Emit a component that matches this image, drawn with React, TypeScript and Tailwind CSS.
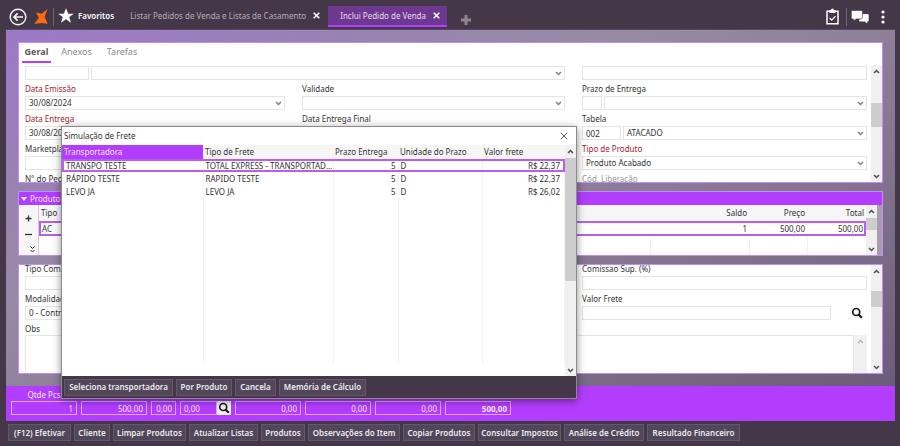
import React from 'react';
import clsx from 'clsx';

const quotes = [
  { carrier: 'TRANSPO TESTE', type: 'TOTAL EXPRESS - TRANSPORTADORA', days: 5, unit: 'D', price: 'R$ 22,37' },
  { carrier: 'RÁPIDO TESTE', type: 'RAPIDO TESTE', days: 5, unit: 'D', price: 'R$ 22,37' },
  { carrier: 'LEVO JA', type: 'LEVO JA', days: 5, unit: 'D', price: 'R$ 26,02' },
];

const footerActions = [
  { label: '(F12) Efetivar', width: 'w-[63px]' },
  { label: 'Cliente', width: 'w-9' },
  { label: 'Limpar Produtos', width: 'w-[73px]' },
  { label: 'Atualizar Listas', width: 'w-[69px]' },
  { label: 'Produtos', width: 'w-11' },
  { label: 'Observações do Item', width: 'w-[92px]' },
  { label: 'Copiar Produtos', width: 'w-[72px]' },
  { label: 'Consultar Impostos', width: 'w-[83px]' },
  { label: 'Análise de Crédito', width: 'w-20' },
  { label: 'Resultado Financeiro', width: 'w-[93px]' },
];

const dialogActions = [
  { label: 'Seleciona transportadora', width: 'w-[109px]' },
  { label: 'Por Produto', width: 'w-14' },
  { label: 'Cancela', width: 'w-[41px]' },
  { label: 'Memória de Cálculo', width: 'w-[87px]' },
];

function Chevron({ up, className }: { up?: boolean; className?: string }) {
  return (
    <svg viewBox="0 0 8 5" className={clsx('w-[7px] h-[5px]', className)} fill="none" stroke="currentColor" strokeWidth="1.8">
      <path d={up ? 'M1.2 4.2 4 1.4l2.8 2.8' : 'M1.2 .8 4 3.6 6.8 .8'} />
    </svg>
  );
}

function Cross({ className }: { className?: string }) {
  return (
    <svg viewBox="0 0 8 8" className={className} fill="none" stroke="currentColor">
      <path d="M.8.8l6.4 6.4M7.2.8.8 7.2" />
    </svg>
  );
}

function SearchIcon() {
  return (
    <svg viewBox="0 0 12 12" className="w-3 h-3" fill="none" stroke="#1c1c1c">
      <circle cx="5.2" cy="5" r="3.5" strokeWidth="1.7" />
      <path d="M7.6 7.6l3.2 3.2" strokeWidth="2.2" />
    </svg>
  );
}

function ScrollBar({ thumb, muted, className }: { thumb?: string; muted?: boolean; className?: string }) {
  return (
    <div className={clsx('flex shrink-0 flex-col items-center bg-[#f0f0f0]', muted ? 'text-[#b8b8b8]' : 'text-[#505050]', className)}>
      <div className="flex h-[13px] shrink-0 items-center">
        <Chevron up />
      </div>
      <div className="w-full flex-1">
        <div className={clsx('w-full bg-[#cdcdcd]', thumb)} />
      </div>
      <div className="flex h-[11px] shrink-0 items-center">
        <Chevron />
      </div>
    </div>
  );
}

function Label({ id, tone = 'text-[#333]', children }: { id: string; tone?: string; children: React.ReactNode }) {
  return (
    <label htmlFor={id} className={clsx('block h-4 whitespace-nowrap pt-[3px] leading-3', tone)}>
      {children}
    </label>
  );
}

function TextBox({ id, value, name, className }: { id?: string; value?: string; name?: string; className?: string }) {
  return (
    <input
      id={id}
      aria-label={name}
      defaultValue={value}
      className={clsx('block h-[14px] min-w-0 border border-[#e4e4e4] bg-white px-[3px] text-[#333] outline-none', className)}
    />
  );
}

function Select({ id, value = '', name, className }: { id?: string; value?: string; name?: string; className?: string }) {
  return (
    <div className={clsx('relative min-w-0', className)}>
      <select
        id={id}
        aria-label={name}
        className="block h-[14px] w-full appearance-none border border-[#e4e4e4] bg-white px-[3px] leading-3 text-[#333] outline-none"
      >
        <option>{value}</option>
      </select>
      <Chevron className="pointer-events-none absolute right-[3px] top-[5px] text-[#808080]" />
    </div>
  );
}

function TopBar() {
  return (
    <header className="flex h-[30px] items-center border-b border-[#564a5c] pl-[3px] text-white">
      <button aria-label="Voltar" className="mt-1">
        <svg viewBox="0 0 18 18" className="h-[18px] w-[18px]" fill="none" stroke="#f4f4f4" strokeWidth="1.4">
          <circle cx="9" cy="9" r="7.8" />
          <path d="M14 9H5M8.6 5.4 5 9l3.6 3.6" strokeWidth="1.7" />
        </svg>
      </button>
      <svg viewBox="0 0 14 15" className="ml-[7px] mt-1 h-[15px] w-[14px]" fill="#ff6a13">
        <path d="M13.6 0 10.6 7.8 13.6 14.8 7 14 .2 15 4.8 9 2.2 3.4 7.6 4.8z" />
      </svg>
      <div className="ml-[5px] mt-1 h-[18px] w-px bg-[#6e6474]" />
      <button className="ml-1 mt-[3px] flex items-center gap-1 font-semibold">
        <svg viewBox="0 0 24 24" className="h-4 w-4" fill="white">
          <path d="M12 .5l3.3 8h8.4l-6.8 5.1 2.6 8.6L12 17l-7.5 5.2 2.6-8.6L.3 8.5h8.4z" />
        </svg>
        Favoritos
      </button>
      <nav className="ml-4 flex self-stretch pt-[6px]">
        <div className="flex h-[21px] w-[198px] items-center justify-between pb-[2px] pr-2 text-[#b5acb9]">
          <a href="#lista" className="whitespace-nowrap">Listar Pedidos de Venda e Listas de Casamento</a>
          <button aria-label="Fechar Listar Pedidos">
            <Cross className="h-[7px] w-[7px] stroke-[1.8] text-white" />
          </button>
        </div>
        <div className="flex h-[21px] w-[119px] items-center justify-between border-b-2 border-[#b33dff] bg-[#6d388f] pl-3 pr-[7px] text-[#e6dcec]">
          <a href="#inclui" className="whitespace-nowrap">Inclui Pedido de Venda</a>
          <button aria-label="Fechar Inclui Pedido">
            <Cross className="h-[7px] w-[7px] stroke-[1.8] text-white" />
          </button>
        </div>
        <button aria-label="Nova aba" className="ml-[14px] mt-1 self-center text-[#8d8590]">
          <svg viewBox="0 0 10 10" className="h-[10px] w-[10px]" fill="currentColor">
            <path d="M3.5 0h3v3.5H10v3H6.5V10h-3V6.5H0v-3h3.5z" />
          </svg>
        </button>
      </nav>
      <div className="ml-auto mt-1 flex items-center pr-[10px]">
        <button aria-label="Tarefas">
          <svg viewBox="0 0 13 17" className="h-[17px] w-[13px]" fill="none" stroke="white">
            <path d="M1 3.2h11v12.6H1z" strokeWidth="1.5" />
            <path d="M3.5 2h1.5a1.5 1.5 0 0 1 3 0h1.5v3h-6z" fill="white" stroke="none" />
            <path d="M3.6 10l2.1 2.1 3.8-4" strokeWidth="1.2" />
          </svg>
        </button>
        <div className="ml-[7px] h-[18px] w-px bg-[#6e6474]" />
        <button aria-label="Mensagens" className="ml-1">
          <svg viewBox="0 0 18 14" className="h-[14px] w-[18px]" fill="white">
            <path d="M12 4h4.5a1.2 1.2 0 0 1 1.2 1.2v5a1.2 1.2 0 0 1-1.2 1.2h-.3v2.2l-2.4-2.2H9.2A1.2 1.2 0 0 1 8 10.2z" />
            <path
              d="M1.5.5h8.7a1.2 1.2 0 0 1 1.2 1.2v6a1.2 1.2 0 0 1-1.2 1.2H5.2L2.6 11V8.9H1.5A1.2 1.2 0 0 1 .3 7.7v-6A1.2 1.2 0 0 1 1.5.5z"
              stroke="#443848"
              strokeWidth=".6"
            />
          </svg>
        </button>
        <button aria-label="Mais opções" className="ml-3">
          <svg viewBox="0 0 4 14" className="h-[14px] w-1" fill="white">
            <circle cx="2" cy="2" r="1.6" />
            <circle cx="2" cy="7" r="1.6" />
            <circle cx="2" cy="12" r="1.6" />
          </svg>
        </button>
      </div>
    </header>
  );
}

const formGrid = 'grid grid-cols-[260fr_263fr_285fr] gap-x-[17px]';

function GeneralPanel() {
  return (
    <section className="flex h-[141px] flex-col overflow-hidden border border-[#c68aff] bg-white">
      <nav className="flex h-[22px] shrink-0 gap-[11px] pl-[3px] text-[9px] text-[#8a8a8a]">
        <a href="#geral" className="flex h-5 w-[29px] items-center justify-center border-b-2 border-[#b33dff] font-bold text-[#5c5c5c]">Geral</a>
        <a href="#anexos" className="flex h-[18px] w-[29px] items-center justify-center">Anexos</a>
        <a href="#tarefas" className="flex h-[18px] w-10 items-center justify-center">Tarefas</a>
      </nav>
      <div className="flex min-h-0 flex-1">
        <div className="min-w-0 flex-1 overflow-hidden pl-[6px] pr-1 pt-[1px]">
          <div className={formGrid}>
            <div className="col-span-2 flex gap-[2px]">
              <TextBox name="Código" className="w-16" />
              <Select name="Cliente" className="flex-1" />
            </div>
            <TextBox name="Complemento" className="w-full" />
            <div>
              <Label id="emissao" tone="text-[#a3202c]">Data Emissão</Label>
              <Select id="emissao" value="30/08/2024" />
            </div>
            <div>
              <Label id="validade">Validade</Label>
              <Select id="validade" />
            </div>
            <div>
              <Label id="prazo">Prazo de Entrega</Label>
              <div className="flex gap-[2px]">
                <TextBox id="prazo" className="w-5" />
                <Select name="Descrição do prazo" className="flex-1" />
              </div>
            </div>
            <div>
              <Label id="entrega" tone="text-[#a3202c]">Data Entrega</Label>
              <Select id="entrega" value="30/08/2024" />
            </div>
            <div>
              <Label id="final">Data Entrega Final</Label>
              <Select id="final" />
            </div>
            <div>
              <Label id="tabela">Tabela</Label>
              <div className="flex gap-[2px]">
                <TextBox id="tabela" value="002" className="w-[39px]" />
                <Select name="Nome da tabela" value="ATACADO" className="flex-1" />
              </div>
            </div>
            <div>
              <Label id="market">Marketplace</Label>
              <Select id="market" />
            </div>
            <div />
            <div>
              <Label id="tipo" tone="text-[#a3202c]">Tipo de Produto</Label>
              <Select id="tipo" value="Produto Acabado" />
            </div>
            <Label id="pedido">N° do Pedido</Label>
            <div />
            <Label id="liberacao" tone="text-[#9a9a9a]">Cód. Liberação</Label>
          </div>
        </div>
        <ScrollBar className="w-[11px]" thumb="mt-[25px] h-6" />
      </div>
    </section>
  );
}

function ProductsPanel() {
  return (
    <section className="border border-[#c68aff] bg-[#b33dff]">
      <h2 className="flex h-[13px] items-center gap-[3px] pl-[2px] text-[#f3e4ff]">
        <svg viewBox="0 0 6 4" className="h-1 w-[6px]" fill="white">
          <path d="M0 0h6L3 4z" />
        </svg>
        Produtos
      </h2>
      <div className="flex h-[50px] bg-[#f6f6f6]">
        <div className="flex w-5 flex-col items-center justify-between border-r border-[#d0d0d0] pb-[2px] pt-[10px] text-[#333]">
          <button aria-label="Adicionar produto">
            <svg viewBox="0 0 7 7" className="h-[7px] w-[7px]" stroke="currentColor" strokeWidth="1.3">
              <path d="M3.5.5v6M.5 3.5h6" />
            </svg>
          </button>
          <button aria-label="Remover produto">
            <svg viewBox="0 0 7 3" className="h-[3px] w-[7px]" stroke="currentColor" strokeWidth="1.3">
              <path d="M0 1.5h7" />
            </svg>
          </button>
          <button aria-label="Expandir" className="ml-2">
            <svg viewBox="0 0 5 7" className="h-[7px] w-[5px]" fill="none" stroke="currentColor">
              <path d="M.5.5l2 2 2-2M.5 4l2 2 2-2" />
            </svg>
          </button>
        </div>
        <table className="h-full flex-1 table-fixed border-collapse bg-white text-right text-[#333]">
          <colgroup>
            <col />
            <col className="w-[99px]" />
            <col className="w-[58px]" />
            <col className="w-[59px]" />
          </colgroup>
          <thead>
            <tr className="h-4 bg-[#f6f6f6]">
              <th className="pl-[2px] text-left font-normal">Tipo</th>
              <th className="pr-[2px] font-normal">Saldo</th>
              <th className="pr-[2px] font-normal">Preço</th>
              <th className="pr-[2px] font-normal">Total</th>
            </tr>
          </thead>
          <tbody>
            <tr className="h-[15px] outline-2 -outline-offset-2 outline-[#bb5cf5]">
              <td className="pl-[3px] text-left">AC</td>
              <td className="pr-[2px]">1</td>
              <td className="pr-[2px]">500,00</td>
              <td className="pr-[3px]">500,00</td>
            </tr>
            <tr>
              <td className="border-r border-[#f0f0f0]" />
              <td className="border-r border-[#f0f0f0]" />
              <td className="border-r border-[#f0f0f0]" />
              <td />
            </tr>
          </tbody>
        </table>
        <ScrollBar className="w-[11px]" thumb="h-3" />
        <div className="w-[5px] bg-[#a79dad]" />
      </div>
    </section>
  );
}

function ShippingPanel() {
  return (
    <section className="flex h-[110px] overflow-hidden border border-[#c68aff] bg-white">
      <div className="flex min-w-0 flex-1 flex-col overflow-hidden pl-[6px] pr-1">
        <div className={clsx(formGrid, '-mt-[5px]')}>
          <div>
            <Label id="tipocom">Tipo Com.</Label>
            <TextBox id="tipocom" className="w-full" />
          </div>
          <div>
            <Label id="comissao">Comissao (%)</Label>
            <TextBox id="comissao" className="w-full" />
          </div>
          <div>
            <Label id="sup">Comissao Sup. (%)</Label>
            <TextBox id="sup" className="w-full" />
          </div>
          <div>
            <Label id="modalidade">Modalidade</Label>
            <Select id="modalidade" value="0 - Contratação" />
          </div>
          <div />
          <div>
            <Label id="frete">Valor Frete</Label>
            <div className="flex items-center">
              <TextBox id="frete" className="flex-1" />
              <button aria-label="Calcular frete" className="flex h-[14px] w-9 items-center justify-end pr-1">
                <SearchIcon />
              </button>
            </div>
          </div>
        </div>
        <Label id="obs">Obs</Label>
        <div className="flex h-14 shrink-0">
          <textarea id="obs" className="block min-w-0 flex-1 resize-none border border-[#e4e4e4] outline-none" />
          <ScrollBar className="w-[13px]" muted />
        </div>
      </div>
      <ScrollBar className="w-[11px]" thumb="mt-[13px] h-4" />
    </section>
  );
}

const totalBox = 'block h-[14px] border border-[#dba6ff] bg-transparent px-[3px] text-right text-[#f3e4ff] outline-none';

function Totals() {
  return (
    <div className="flex h-[35px] items-end gap-1 bg-[#b33dff] pb-[6px] pl-[5px] text-[#f3e4ff]">
      <label className="text-center leading-3">
        Qtde Pcs
        <input defaultValue="1" className={clsx(totalBox, 'w-[66px]')} />
      </label>
      <label className="text-center leading-3">
        Total
        <input defaultValue="500,00" className={clsx(totalBox, 'w-[66px]')} />
      </label>
      <input aria-label="Desconto (%)" defaultValue="0,00" className={clsx(totalBox, 'w-[25px]')} />
      <div className="flex w-[51px]">
        <input aria-label="Desconto" defaultValue="0,00" className="block h-[14px] min-w-0 flex-1 border border-[#dba6ff] bg-transparent px-[3px] outline-none" />
        <button aria-label="Buscar desconto" className="flex h-[14px] w-[14px] items-center justify-center bg-[#f2f2f2]">
          <SearchIcon />
        </button>
      </div>
      <input aria-label="Frete" defaultValue="0,00" className={clsx(totalBox, 'w-[66px]')} />
      <input aria-label="Seguro" defaultValue="0,00" className={clsx(totalBox, 'w-[66px]')} />
      <input aria-label="Impostos" defaultValue="0,00" className={clsx(totalBox, 'w-[66px]')} />
      <input aria-label="Total geral" defaultValue="500,00" className={clsx(totalBox, 'w-[66px] font-bold')} />
    </div>
  );
}

function ActionButton({ label, width }: { label: string; width: string }) {
  return (
    <button className={clsx('h-[17px] whitespace-nowrap border border-[#63586a] bg-[#51465a] text-center font-semibold text-[#ececec]', width)}>
      {label}
    </button>
  );
}

function FreightDialog() {
  const line = 'border-r border-[#f2f2f2]';
  return (
    <div
      role="dialog"
      aria-labelledby="frete-titulo"
      className="absolute left-[61px] top-[126px] w-[516px] border border-[#8b8b8b] bg-white text-[#333] shadow-[0_2px_8px_rgba(0,0,0,0.45)]"
    >
      <div className="flex h-[18px] items-center justify-between pl-[2px] pr-2">
        <h2 id="frete-titulo">Simulação de Frete</h2>
        <button aria-label="Fechar">
          <Cross className="h-2 w-2 text-[#555]" />
        </button>
      </div>
      <div className="flex h-[231px]">
        <div className="flex-1">
          <table className="h-[218px] w-full table-fixed border-collapse">
            <colgroup>
              <col className="w-[141px]" />
              <col className="w-[130px]" />
              <col className="w-[65px]" />
              <col className="w-[84px]" />
              <col />
            </colgroup>
            <thead>
              <tr className="h-[14px] bg-[#f6f6f6] text-left">
                <th className="bg-[#b33dff] pl-[2px] font-normal text-[#f3e4ff]">Transportadora</th>
                <th className="pl-[2px] font-normal">Tipo de Frete</th>
                <th className="whitespace-nowrap pl-[2px] font-normal">Prazo Entrega</th>
                <th className="pl-[2px] font-normal">Unidade do Prazo</th>
                <th className="pl-[2px] font-normal">Valor frete</th>
              </tr>
            </thead>
            <tbody>
              {quotes.map((q, i) => (
                <tr key={q.carrier} className={clsx('h-[13px]', i === 0 && 'outline-2 -outline-offset-2 outline-[#bb5cf5]')}>
                  <td className={clsx(line, 'pl-1')}>{q.carrier}</td>
                  <td className={clsx(line, 'truncate pl-[2px]')}>{q.type}</td>
                  <td className={clsx(line, 'pr-[2px] text-right')}>{q.days}</td>
                  <td className={clsx(line, 'pl-[2px]')}>{q.unit}</td>
                  <td className={clsx(line, 'pr-1 text-right')}>{q.price}</td>
                </tr>
              ))}
              <tr>
                <td className={line} />
                <td className={line} />
                <td className={line} />
                <td className={line} />
                <td className={line} />
              </tr>
            </tbody>
          </table>
        </div>
        <ScrollBar className="w-[11px]" thumb="h-[123px]" />
      </div>
      <div className="flex h-[22px] items-center gap-[3px] bg-[#443848] pl-[2px]">
        {dialogActions.map((a) => (
          <ActionButton key={a.label} {...a} />
        ))}
      </div>
    </div>
  );
}

export default function App() {
  return (
    <div className="relative min-h-screen bg-[#443848] pl-[6px] pr-[5px] font-['Noto_Sans',sans-serif] text-[8px] leading-3">
      <TopBar />
      <main className="bg-[linear-gradient(to_bottom_right,#9c78c8_0%,#978aa3_35%,#85758f_65%,#665975_100%)]">
        <div className="flex flex-col gap-2 px-3 pb-3 pt-3">
          <GeneralPanel />
          <ProductsPanel />
          <ShippingPanel />
        </div>
        <Totals />
      </main>
      <footer className="flex gap-[3px] pb-[5px] pl-[2px] pt-[3px]">
        {footerActions.map((a) => (
          <ActionButton key={a.label} {...a} />
        ))}
      </footer>
      <FreightDialog />
    </div>
  );
}
